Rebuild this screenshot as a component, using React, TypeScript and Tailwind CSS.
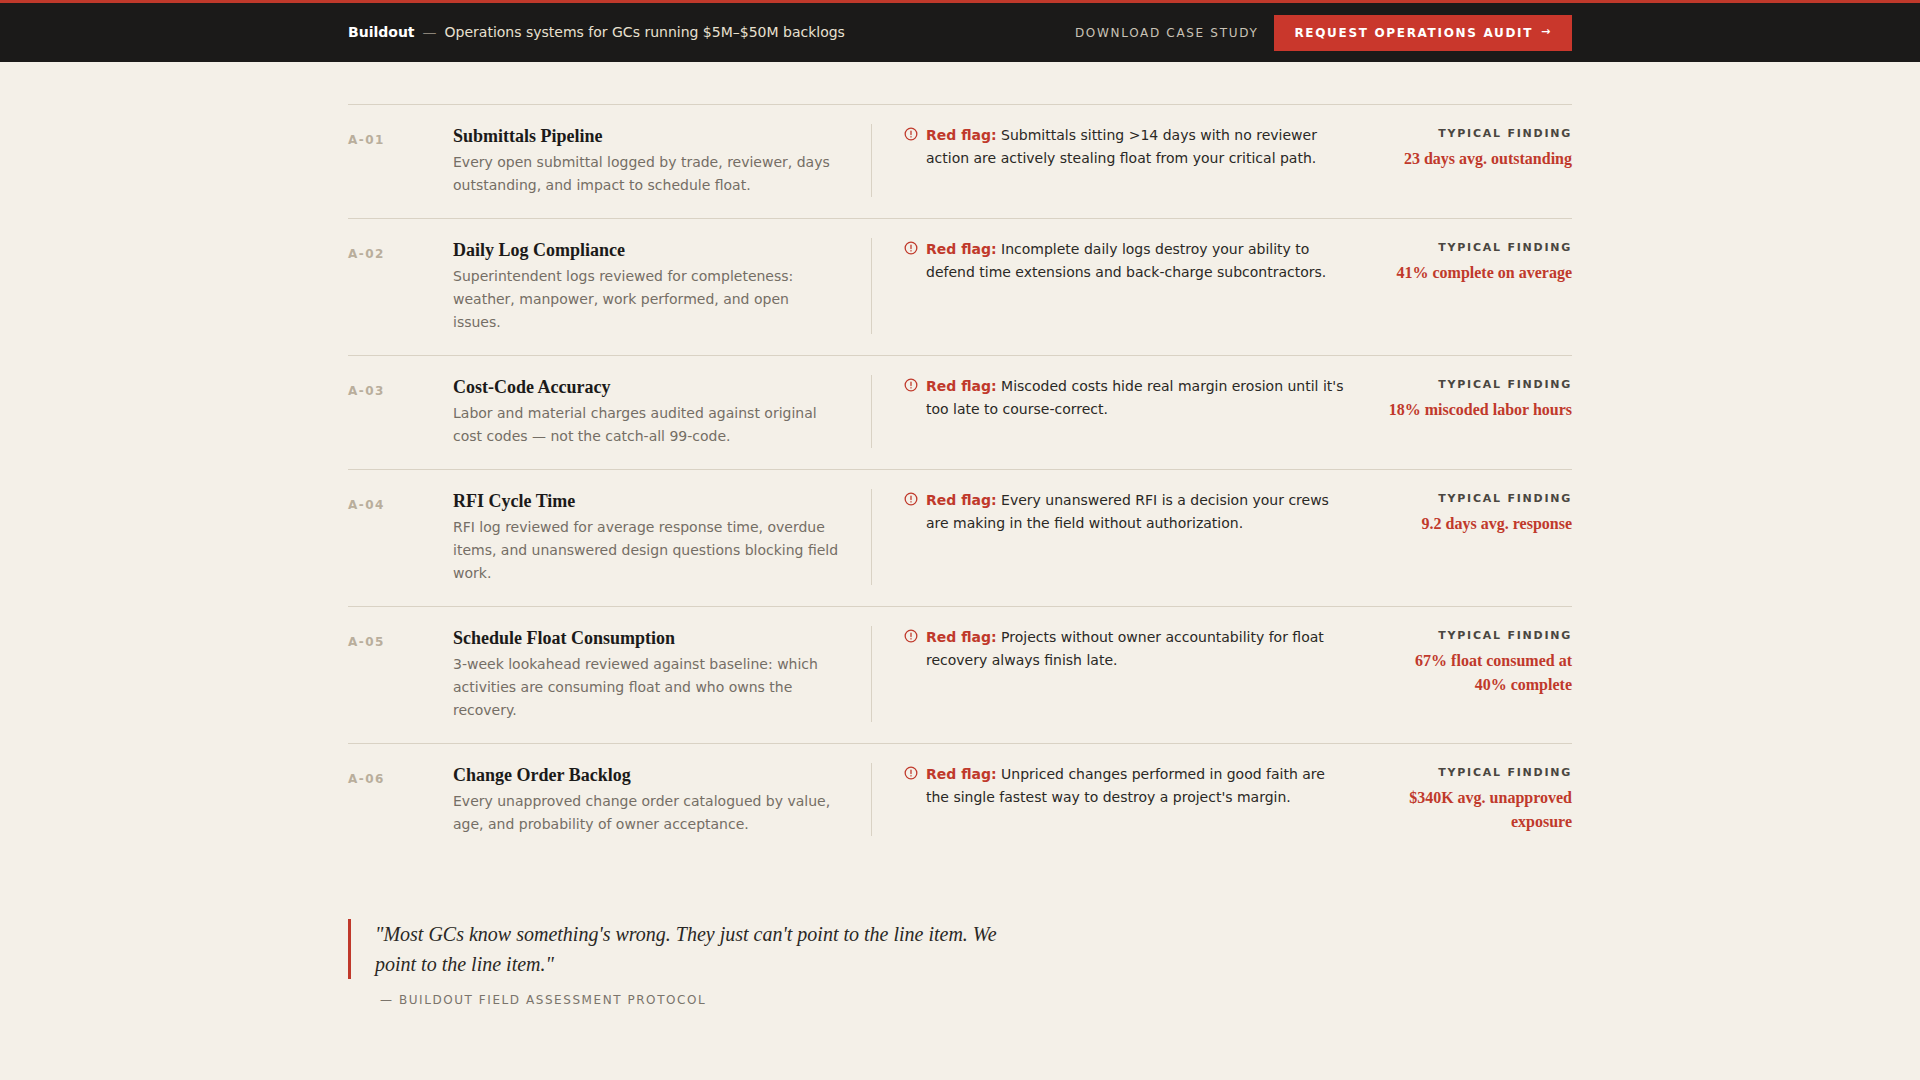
import React from "react";

const rows = [
  ["A-01","Submittals Pipeline","Every open submittal logged by trade, reviewer, days outstanding, and impact to schedule float.","Submittals sitting >14 days with no reviewer action are actively stealing float from your critical path.","23 days avg. outstanding"],
  ["A-02","Daily Log Compliance","Superintendent logs reviewed for completeness: weather, manpower, work performed, and open issues.","Incomplete daily logs destroy your ability to defend time extensions and back-charge subcontractors.","41% complete on average"],
  ["A-03","Cost-Code Accuracy","Labor and material charges audited against original cost codes — not the catch-all 99-code.","Miscoded costs hide real margin erosion until it's too late to course-correct.","18% miscoded labor hours"],
  ["A-04","RFI Cycle Time","RFI log reviewed for average response time, overdue items, and unanswered design questions blocking field work.","Every unanswered RFI is a decision your crews are making in the field without authorization.","9.2 days avg. response"],
  ["A-05","Schedule Float Consumption","3-week lookahead reviewed against baseline: which activities are consuming float and who owns the recovery.","Projects without owner accountability for float recovery always finish late.","67% float consumed at 40% complete"],
  ["A-06","Change Order Backlog","Every unapproved change order catalogued by value, age, and probability of owner acceptance.","Unpriced changes performed in good faith are the single fastest way to destroy a project's margin.","$340K avg. unapproved exposure"],
];

const sans = { fontFamily: '"DejaVu Sans", sans-serif' };
const serif = { fontFamily: '"Liberation Serif", serif' };

export default function App() {
  return (
    <div className="min-h-[1080px] bg-[#f4f0e8]" style={sans}>
      <header className="bg-[#1b1a19] border-t-[3px] border-[#c0392b] h-[62px]">
        <div className="mx-auto w-[1224px] h-full flex items-center justify-between">
          <div className="text-[14px] text-[#e8e0d0]">
            <span className="font-bold text-white">Buildout</span>
            <span className="text-[#8a8378] mx-2">—</span>
            Operations systems for GCs running $5M–$50M backlogs
          </div>
          <div className="flex items-center gap-4">
            <span className="text-[12px] tracking-[0.14em] text-[#c9c2b6]">DOWNLOAD CASE STUDY</span>
            <span className="bg-[#c9372c] text-white text-[12px] font-bold tracking-[0.14em] px-5 h-[36px] flex items-center gap-2">
              REQUEST OPERATIONS AUDIT <span className="text-[11px]">→</span>
            </span>
          </div>
        </div>
      </header>
      <main className="mx-auto w-[1224px] pt-[42px]">
        <div className="border-t border-[#d9d2c4]">
          {rows.map(([code, title, desc, flag, finding]) => (
            <div key={code} className="flex border-b border-[#d9d2c4] last:border-b-0 pt-[19px] pb-[21px]">
              <div className="w-[105px] text-[12px] font-bold tracking-[0.12em] text-[#b9ae9c] pt-[7px]">{code}</div>
              <div className="w-[418px] pr-8">
                <div className="text-[18px] font-bold text-[#1b1a19] leading-[25px]" style={serif}>{title}</div>
                <div className="text-[14px] leading-[23px] text-[#746e65] mt-[2px]">{desc}</div>
              </div>
              <div className="flex-1 border-l border-[#d9d2c4] pl-[32px] flex">
                <div className="flex gap-[8px] w-[456px] pr-[8px] text-[14px] leading-[23px] text-[#2a2825]">
                  <svg width="14" height="14" viewBox="0 0 24 24" className="mt-[3px] shrink-0" fill="none" stroke="#c0392b" strokeWidth="2.2"><circle cx="12" cy="12" r="10"/><path d="M12 7v6M12 16.5v.5" strokeLinecap="round"/></svg>
                  <div><span className="font-bold text-[#c0392b]">Red flag:</span> {flag}</div>
                </div>
                <div className="flex-1 text-right pl-6">
                  <div className="text-[11px] font-bold tracking-[0.16em] text-[#4a4640] pt-[2px]">TYPICAL FINDING</div>
                  <div className="text-[16px] font-bold text-[#c0392b] leading-[24px] mt-[4px]" style={serif}>{finding}</div>
                </div>
              </div>
            </div>
          ))}
        </div>
        <div className="mt-[62px] border-l-[3px] border-[#c0392b] pl-6 w-[660px]">
          <div className="text-[20px] italic leading-[30px] text-[#2a2825]" style={serif}>"Most GCs know something's wrong. They just can't point to the line item. We point to the line item."</div>
        </div>
        <div className="mt-3 pl-[32px] text-[12px] tracking-[0.13em] text-[#7a746b]">— BUILDOUT FIELD ASSESSMENT PROTOCOL</div>
      </main>
    </div>
  );
}
